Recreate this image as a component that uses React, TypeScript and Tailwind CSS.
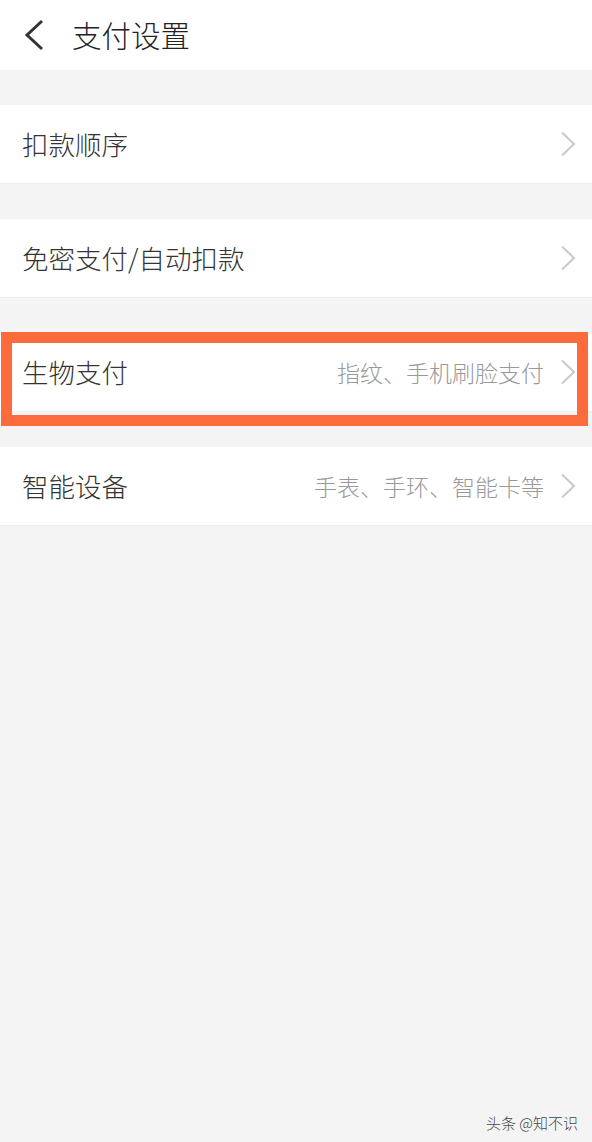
import React from 'react';

interface Item {
  label: string;
  hint?: string;
  highlight?: boolean;
}

const items: Item[] = [
  { label: '扣款顺序' },
  { label: '免密支付/自动扣款' },
  { label: '生物支付', hint: '指纹、手机刷脸支付', highlight: true },
  { label: '智能设备', hint: '手表、手环、智能卡等' },
];

const font = { fontFamily: '"Noto Sans CJK SC", "Noto Sans", sans-serif' };

const Chevron: React.FC = () => (
  <svg width="16" height="26" viewBox="0 0 16 26" className="shrink-0">
    <path d="M2 1.5 L14 13 L2 24.5" fill="none" stroke="#c9c9c9" strokeWidth="2" />
  </svg>
);

const App: React.FC = () => {
  return (
    <div className="relative min-h-[1142px] w-full bg-[#f4f4f4] font-light" style={font}>
      {/* Header */}
      <div className="flex h-[70px] items-center bg-white">
        <svg width="22" height="32" viewBox="0 0 22 32" className="ml-[23px]">
          <path d="M19 2 L4 16 L19 30" fill="none" stroke="#333333" strokeWidth="3" />
        </svg>
        <span className="ml-[27px] text-[29.5px] leading-none text-[#222222]">支付设置</span>
      </div>

      {/* Items */}
      <div className="mt-[35px] flex flex-col gap-[35px]">
        {items.map((item) => (
          <div key={item.label} className="relative">
            <div className="flex h-[79px] items-center bg-white pl-[22px] pr-[16px] border-b border-[#ededed]">
              <span className="text-[26.5px] leading-none text-[#333333]">{item.label}</span>
              <div className="ml-auto flex items-center gap-[16px]">
                {item.hint && (
                  <span className="text-[23px] leading-none text-[#999999]">{item.hint}</span>
                )}
                <Chevron />
              </div>
            </div>
            {item.highlight && (
              <div className="absolute left-[1px] right-[4px] top-[-1px] h-[94px] border-[11px] border-[#fb6b3b]" />
            )}
          </div>
        ))}
      </div>

      {/* Watermark */}
      <div className="absolute bottom-[12px] right-[14px] text-[15px] leading-none text-[#444444]">
        头条 @知不识
      </div>
    </div>
  );
};

export default App;
